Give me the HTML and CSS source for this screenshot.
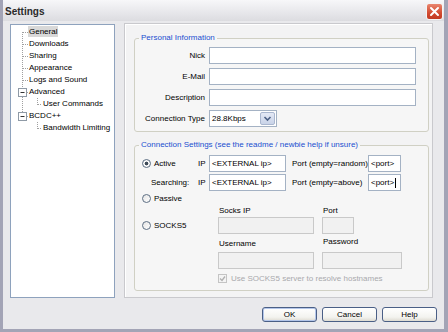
FILE: index.html
```html
<!DOCTYPE html>
<html lang="en">
<head>
  <meta charset="UTF-8" />
  <title>Settings</title>
  <link rel="stylesheet" href="styles.css">
</head>
<body>
  <div class="window">
    <!-- title bar -->
    <div class="titlebar">
      <span class="title">Settings</span>
      <span class="close">
        <svg width="15" height="15" viewBox="0 0 15 15"><path d="M4 4 L11 11 M11 4 L4 11" stroke="#fff" stroke-width="2" stroke-linecap="round"/></svg>
      </span>
    </div>

    <div class="main">
      <!-- page tree -->
      <div class="tree">
        <svg class="tree-lines" width="103" height="272">
          <g stroke="#a0a0a0" stroke-dasharray="1 1" fill="none">
            <path d="M11.5 7 V64 M11.5 72 V88"/>
            <path d="M12 7.5 H17 M12 19.5 H17 M12 31.5 H17 M12 43.5 H17 M12 55.5 H17 M16 67.5 H17 M16 91.5 H17"/>
            <path d="M26.5 73 V80 M27 79.5 H31 M26.5 97 V104 M27 103.5 H31"/>
          </g>
          <g stroke="#8f9aa6" fill="#fff">
            <rect x="7.5" y="63.5" width="8" height="8"/>
            <rect x="7.5" y="87.5" width="8" height="8"/>
          </g>
          <g stroke="#333">
            <path d="M9.5 67.5 H13.5 M9.5 91.5 H13.5"/>
          </g>
        </svg>
        <ul class="nodes">
          <li class="lvl1"><span class="sel">General</span></li>
          <li class="lvl1">Downloads</li>
          <li class="lvl1">Sharing</li>
          <li class="lvl1">Appearance</li>
          <li class="lvl1">Logs and Sound</li>
          <li class="lvl1">Advanced</li>
          <li class="lvl2">User Commands</li>
          <li class="lvl1">BCDC++</li>
          <li class="lvl2">Bandwidth Limiting</li>
        </ul>
      </div>

      <!-- settings page -->
      <div class="page">
        <fieldset class="group personal">
          <legend>Personal Information</legend>
          <div class="form">
            <label>Nick</label>
            <div class="field"></div>
            <label>E-Mail</label>
            <div class="field"></div>
            <label>Description</label>
            <div class="field"></div>
            <label>Connection Type</label>
            <div class="select">
              <span class="select-text">28.8Kbps</span>
              <span class="arrow">
                <svg width="9" height="7" viewBox="0 0 9 7"><path d="M1.5 2 L4.5 5 L7.5 2" stroke="#4d6185" stroke-width="1.6" fill="none"/></svg>
              </span>
            </div>
          </div>
        </fieldset>

        <fieldset class="group conn">
          <legend>Connection Settings (see the readme / newbie help if unsure)</legend>
          <div class="row">
            <span class="opt"><span class="radio checked"></span>Active</span>
            <span class="ip">IP</span>
            <div class="field ipfield">&lt;EXTERNAL ip&gt;</div>
            <span class="portlbl">Port (empty=random)</span>
            <div class="field portfield">&lt;port&gt;</div>
          </div>
          <div class="row row2">
            <span class="opt search">Searching:</span>
            <span class="ip">IP</span>
            <div class="field ipfield">&lt;EXTERNAL ip&gt;</div>
            <span class="portlbl">Port (empty=above)</span>
            <div class="field portfield">&lt;port&gt;<span class="caret"></span></div>
          </div>
          <div class="row small">
            <span class="opt"><span class="radio"></span>Passive</span>
          </div>
          <div class="row small labels">
            <span class="lbl-a">Socks IP</span>
            <span>Port</span>
          </div>
          <div class="row row5">
            <span class="opt wide"><span class="radio"></span>SOCKS5</span>
            <div class="field off sockip"></div>
            <div class="field off sockport"></div>
          </div>
          <div class="row small labels gap4">
            <span class="lbl-a">Username</span>
            <span class="pw">Password</span>
          </div>
          <div class="row indent gap4">
            <div class="field off sockip"></div>
            <div class="field off sockpass"></div>
          </div>
          <div class="row small indent gap4 dim">
            <span class="check">
              <svg width="7" height="7" viewBox="0 0 7 7"><path d="M1 3.5 L3 5.5 L6 1.5" stroke="#b0b0b0" stroke-width="1.3" fill="none"/></svg>
            </span>
            Use SOCKS5 server to resolve hostnames
          </div>
        </fieldset>
      </div>
    </div>

    <!-- dialog buttons -->
    <div class="buttons">
      <button class="btn default">OK</button>
      <button class="btn">Cancel</button>
      <button class="btn">Help</button>
    </div>
  </div>
</body>
</html>
```

FILE: styles.css
```css
/* dialog frame */
body {
  margin: 0;
  font-family: 'Liberation Sans', Arial, sans-serif;
  font-size: 8px;
  color: #000;
}
.window {
  width: 448px;
  height: 332px;
  box-sizing: border-box;
  background: #e9e9ec;
  border: 3px solid #a3a4b6;
  border-top: 0;
  border-right-width: 4px;
  display: flex;
  flex-direction: column;
}
.titlebar {
  height: 21px;
  box-sizing: border-box;
  display: flex;
  align-items: center;
  justify-content: space-between;
  padding: 1px 1px 0 2px;
  background: linear-gradient(#f7f7f9, #e4e4e8 70%, #dcdce0);
}
.title {
  font-size: 10px;
  font-weight: bold;
  color: #2a2a2a;
}
.close {
  width: 17px;
  height: 17px;
  box-sizing: border-box;
  border: 1px solid #f4f4f4;
  border-radius: 3px;
  background: linear-gradient(#e9866f, #d24a30 60%, #c23a22);
  display: flex;
  align-items: center;
  justify-content: center;
}

.main {
  display: flex;
  gap: 9px;
  padding: 3px 0 0 7px;
}

/* tree */
.tree {
  position: relative;
  width: 105px;
  height: 274px;
  box-sizing: border-box;
  border: 1px solid #8ea2bd;
  background: #fff;
}
.tree-lines {
  position: absolute;
  left: 0;
  top: 0;
}
.nodes {
  list-style: none;
  margin: 0;
  padding: 1px 0 0 0;
  position: relative;
}
.nodes li {
  height: 12px;
  line-height: 12px;
  white-space: nowrap;
}
.lvl1 { padding-left: 18px; }
.lvl2 { padding-left: 32px; }
.sel {
  background: #d8d8d8;
  padding: 1px 1px;
  margin-left: -1px;
}

/* settings page */
.page {
  width: 309px;
  height: 275px;
  margin-top: -1px;
  box-sizing: border-box;
  border: 1px solid #c9c9cd;
  box-shadow: inset 1px 1px 0 #fff;
  background: #f3f3f4;
  padding: 9px 0 0 9px;
}
.group {
  width: 295px;
  box-sizing: border-box;
  margin: 0;
  border: 1px solid #d0d0c4;
  border-radius: 3px;
  background: #f6f6f6;
}
.group legend {
  color: #1a4fd0;
  line-height: 10px;
  padding: 0 2px;
  margin-left: 4px;
}
.personal { padding: 4px 0 4px 0; }
.conn {
  margin-top: 8px;
  padding: 5px 0 7px 7px;
}
.conn legend { margin-left: -3px; }

.form {
  display: grid;
  grid-template-columns: 70px 207px;
  grid-auto-rows: 17px;
  column-gap: 4px;
  row-gap: 4px;
}
.form label {
  justify-self: end;
  align-self: center;
}

.field {
  box-sizing: border-box;
  height: 17px;
  border: 1px solid #a4b2c4;
  background: #fff;
  padding: 0 2px;
  display: flex;
  align-items: center;
  white-space: nowrap;
}
.field.off {
  background: #f1f1f1;
  border-color: #c9c9c9;
}
.caret {
  width: 1px;
  height: 10px;
  background: #000;
  margin-left: 1px;
}

.select {
  width: 68px;
  height: 17px;
  box-sizing: border-box;
  border: 1px solid #a4b2c4;
  background: #fff;
  display: flex;
  align-items: center;
  justify-content: space-between;
  padding-left: 2px;
}
.arrow {
  width: 15px;
  height: 13px;
  box-sizing: border-box;
  margin-right: 1px;
  border: 1px solid #aab7cf;
  border-radius: 2px;
  background: linear-gradient(#e4e9f5, #c9d3e8);
  display: flex;
  align-items: center;
  justify-content: center;
}

/* connection rows */
.row {
  display: flex;
  align-items: center;
  height: 17px;
  white-space: nowrap;
}
.row + .row { margin-top: 2px; }
.row.small { height: 10px; }
.row.gap4 { margin-top: 4px; }
.opt {
  width: 56px;
  display: flex;
  align-items: center;
}
.opt.wide { width: 76px; }
.opt.search { padding-left: 9px; box-sizing: border-box; }
.ip { width: 11px; }
.ipfield { width: 77px; }
.portlbl { width: 76px; margin-left: 6px; }
.portfield { width: 33px; }
.sockip { width: 96px; }
.sockport { width: 32px; margin-left: 8px; }
.sockpass { width: 80px; margin-left: 8px; }
.labels { padding-left: 77px; }
.lbl-a { width: 104px; }
.pw { margin-top: -3px; }
.indent { padding-left: 76px; }

.radio {
  width: 9px;
  height: 9px;
  box-sizing: border-box;
  border: 1px solid #5d6f84;
  border-radius: 50%;
  background: linear-gradient(135deg, #e4e4e4, #fff);
  margin-right: 3px;
  flex-shrink: 0;
}
.radio.checked {
  background: radial-gradient(circle, #3f4b58 0 1.6px, #fff 2.2px, #e4e4e4);
}
.check {
  width: 9px;
  height: 9px;
  box-sizing: border-box;
  border: 1px solid #c4c4c4;
  background: #f4f4f4;
  margin-right: 4px;
  display: flex;
  align-items: center;
  justify-content: center;
}
.dim { color: #a9a9ad; }

/* dialog buttons */
.buttons {
  display: flex;
  justify-content: flex-end;
  gap: 5px;
  padding: 9px 7px 0 0;
}
.btn {
  width: 55px;
  height: 15px;
  padding: 0;
  font: inherit;
  color: #000;
  border: 1px solid #4a5f86;
  border-radius: 3px;
  background: linear-gradient(#ffffff, #f3f3ef 70%, #dedbd2);
}
.btn.default {
  box-shadow: inset 0 0 0 1px #b4c6ea;
}
```
